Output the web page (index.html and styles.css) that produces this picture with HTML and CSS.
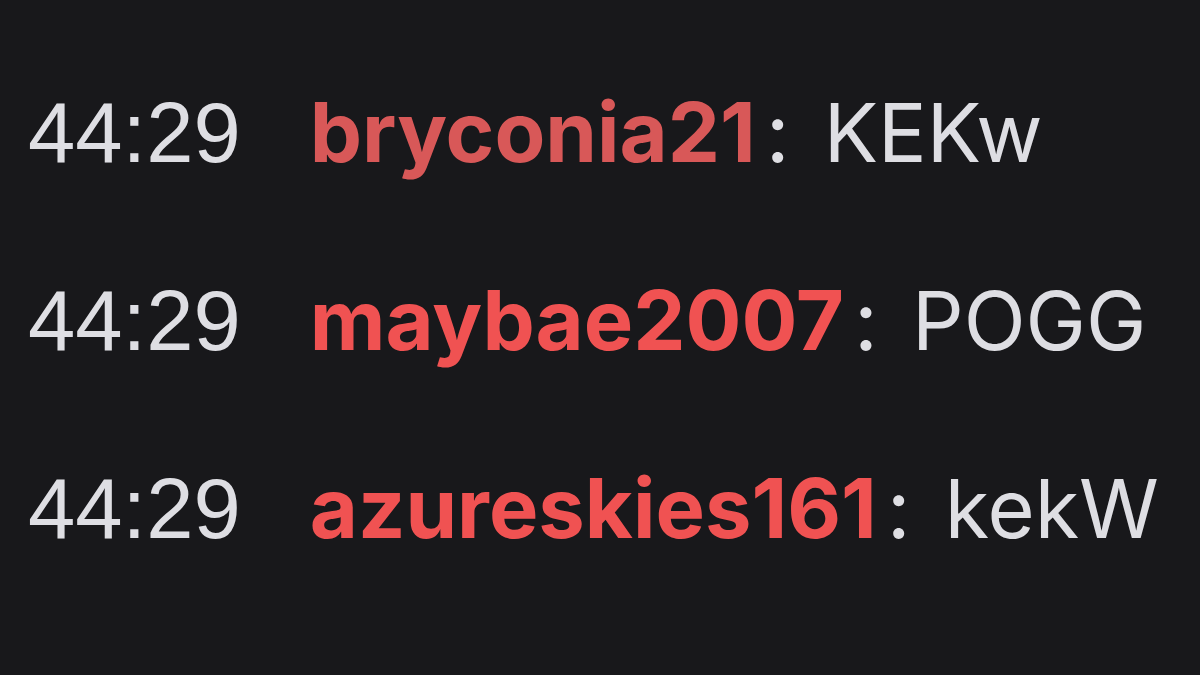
FILE: index.html
```html
<!DOCTYPE html>
<html lang="en">
<head>
<meta charset="utf-8">
<title>Chat</title>
<link rel="stylesheet" href="styles.css">
</head>
<body>
<div class="chat">
  <div class="line"><span class="time">44:29</span><span class="name name-muted">bryconia21</span><span class="sep">:</span><span class="msg">KEKw</span></div>
  <div class="line"><span class="time">44:29</span><span class="name">maybae2007</span><span class="sep">:</span><span class="msg">POGG</span></div>
  <div class="line"><span class="time">44:29</span><span class="name">azureskies161</span><span class="sep">:</span><span class="msg">kekW</span></div>
</div>
</body>
</html>
```
FILE: styles.css
```css
html, body {
  margin: 0;
  padding: 0;
  height: 100%;
  background: #18181b;
}

.chat {
  display: flex;
  flex-direction: column;
  padding: 38px 0 0 28px;
  font-family: Inter, "Noto Sans", sans-serif;
  font-size: 83px;
  line-height: 188px;
  color: #dedee3;
}

.line {
  height: 188px;
  white-space: nowrap;
}

.time {
  display: inline-block;
  margin-right: 69px;
  font-family: "Liberation Sans", Arial, sans-serif;
  font-size: 85px;
  color: #dedee3;
}

.name {
  font-weight: 700;
  color: #f05252;
}

.name-muted {
  color: #d85858;
}

.sep {
  margin-left: 10px;
  color: #dedee3;
}

.msg {
  margin-left: 34px;
  font-size: 81px;
  color: #dedee3;
}
```
